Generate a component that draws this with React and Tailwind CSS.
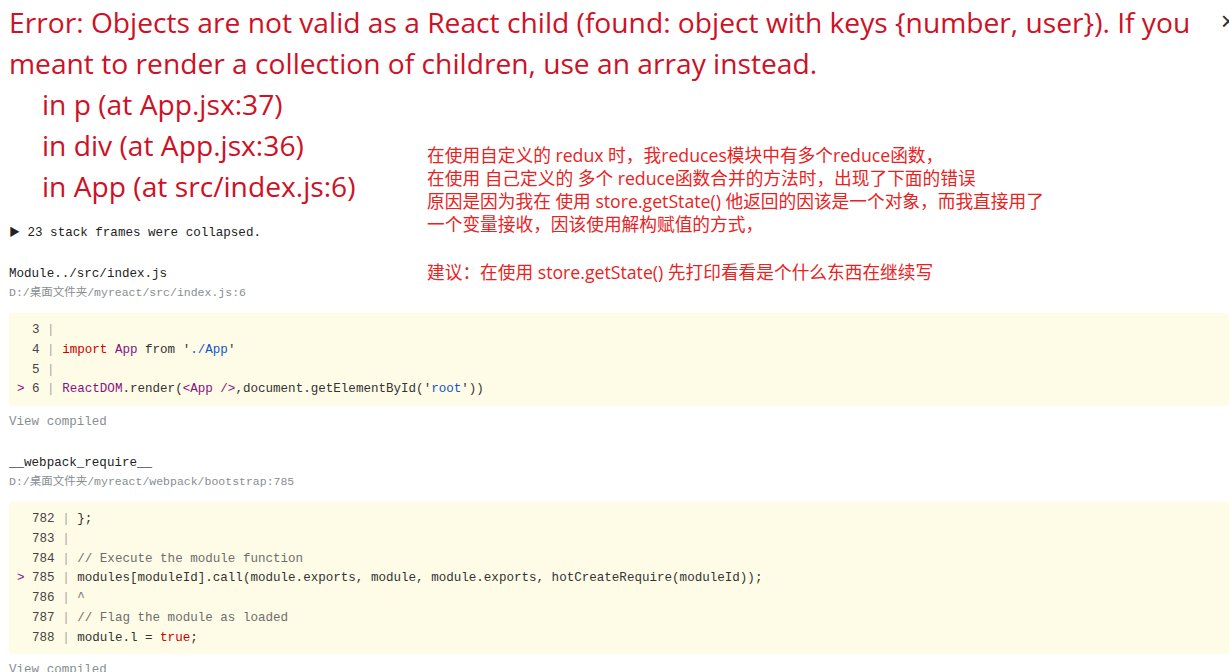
const mono = { fontFamily: '"Liberation Mono", "Noto Sans CJK SC", monospace' };

const D = '#333333';
const P = '#881280';
const B = '#1155cc';
const R = '#c80000';
const G = '#6e6e6e';

const frames = [
  {
    name: 'Module../src/index.js',
    path: 'D:/桌面文件夹/myreact/src/index.js:6',
    lines: [
      { n: '  3', tokens: [] },
      { n: '  4', tokens: [['import', R], [' ', D], ['App', P], [' from ', D], ["'", D], ['./App', B], ["'", D]] },
      { n: '  5', tokens: [] },
      {
        n: '  6',
        mark: true,
        tokens: [
          ['ReactDOM', P], ['.render(', D], ['<App />', P], [',document.getElementById(', D],
          ["'", D], ['root', B], ["'", D], ['))', D],
        ],
      },
    ],
  },
  {
    name: '__webpack_require__',
    path: 'D:/桌面文件夹/myreact/webpack/bootstrap:785',
    lines: [
      { n: '  782', tokens: [['};', D]] },
      { n: '  783', tokens: [] },
      { n: '  784', tokens: [['// Execute the module function', G]] },
      {
        n: '  785',
        mark: true,
        tokens: [['modules[moduleId].call(module.exports, module, module.exports, hotCreateRequire(moduleId));', D]],
      },
      { n: '  786', tokens: [['^', G]] },
      { n: '  787', tokens: [['// Flag the module as loaded', G]] },
      { n: '  788', tokens: [['module.l = ', D], ['true', R], [';', D]] },
    ],
  },
];

const CodeLine = ({ line }) => (
  <div className="whitespace-pre">
    {line.mark ? (
      <>
        <span className="text-[#881280]">{'>'}</span>
        <span className="text-[#444]">{line.n.slice(1)}</span>
      </>
    ) : (
      <span className="text-[#444]">{line.n}</span>
    )}
    <span className="text-[#a8a8a8]"> | </span>
    {line.tokens.map(([t, c], i) => (
      <span key={i} style={{ color: c }}>{t}</span>
    ))}
  </div>
);

const Frame = ({ frame }) => (
  <div className="mt-[21px]" style={mono}>
    <div className="text-[12.55px] leading-[20px] text-[#222]">{frame.name}</div>
    <div className="mt-[1px] text-[11.5px] leading-[16px] text-[#878e91]">{frame.path}</div>
    <div className="mt-[12px] -mr-[9px] rounded-[3px] bg-[#fefbe7] pl-[8px] pt-[8px] pb-[6px] text-[12.55px] leading-[19.75px] text-[#333]">
      {frame.lines.map((l, i) => (
        <CodeLine key={i} line={l} />
      ))}
    </div>
    <div className="mt-[6px] text-[12.55px] leading-[20px] text-[#878e91]">View compiled</div>
  </div>
);

const App = () => {
  return (
    <div className="relative h-[672px] w-full overflow-hidden bg-white">
      <div className="px-[9px]">
        {/* Header */}
        <div
          className="pt-[1.5px] text-[28.2px] leading-[41px] text-[#ce1126]"
          style={{ fontFamily: '"Open Sans", "Liberation Sans", sans-serif' }}
        >
          <div className="whitespace-nowrap">Error: Objects are not valid as a React child (found: object with keys {'{'}number, user{'}'}). If you</div>
          <div>meant to render a collection of children, use an array instead.</div>
          <div className="pl-[33px]">in p (at App.jsx:37)</div>
          <div className="pl-[33px]">in div (at App.jsx:36)</div>
          <div className="pl-[33px]">in App (at src/index.js:6)</div>
        </div>

        {/* Collapsed frames */}
        <div className="mt-[16.5px] text-[12.55px] leading-[20px] text-[#222]" style={mono}>
          <span className="text-[11px]">▶</span> 23 stack frames were collapsed.
        </div>

        {frames.map((f, i) => (
          <Frame key={i} frame={f} />
        ))}
      </div>

      {/* close button */}
      <div
        className="absolute right-[-7px] top-[6px] text-[26px] leading-[30px] text-[#293238]"
        style={{ fontFamily: '"Liberation Sans", Arial, sans-serif' }}
      >
        ×
      </div>

      {/* Annotation */}
      <div
        className="absolute left-[427px] top-[144px] text-[17.7px] leading-[23px] text-[#e8231f]"
        style={{ fontFamily: '"Open Sans", "Noto Sans CJK SC", sans-serif' }}
      >
        <div>在使用自定义的 redux 时，我reduces模块中有多个reduce函数，</div>
        <div>在使用 自己定义的 多个 reduce函数合并的方法时，出现了下面的错误</div>
        <div>原因是因为我在 使用 store.getState() 他返回的因该是一个对象，而我直接用了</div>
        <div>一个变量接收，因该使用解构赋值的方式，</div>
        <div className="mt-[25px]">建议：在使用 store.getState() 先打印看看是个什么东西在继续写</div>
      </div>
    </div>
  );
};

export default App;
